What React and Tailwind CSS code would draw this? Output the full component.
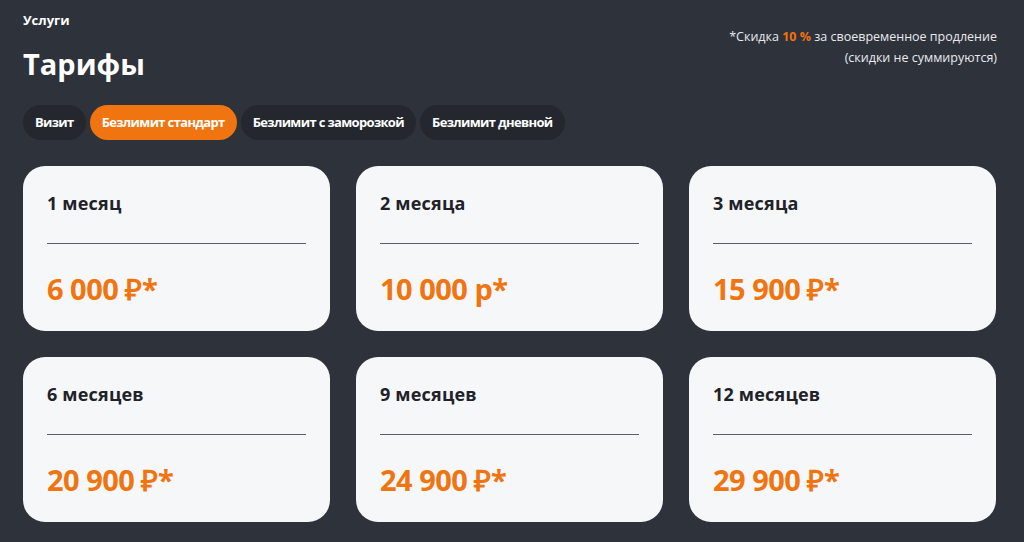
import { useState } from "react";

const TABS = ["Визит", "Безлимит стандарт", "Безлимит с заморозкой", "Безлимит дневной"];

const PLANS = [
  { term: "1 месяц", price: "6 000 ₽*" },
  { term: "2 месяца", price: "10 000 р*" },
  { term: "3 месяца", price: "15 900 ₽*" },
  { term: "6 месяцев", price: "20 900 ₽*" },
  { term: "9 месяцев", price: "24 900 ₽*" },
  { term: "12 месяцев", price: "29 900 ₽*" },
];

function PlanCard({ term, price }) {
  return (
    <div className="h-[165px] rounded-[22px] bg-[#f6f7f9] px-6 pt-[24px]">
      <p className="font-['Open_Sans',sans-serif] text-[18px] font-bold leading-[26px] tracking-[0.2px] text-[#1f2228]">
        {term}
      </p>
      <div className="mt-[27px] h-px bg-[#5b5e63]" />
      <p className="mt-[23px] font-['Open_Sans',sans-serif] text-[29px] font-bold leading-[44px] tracking-[-0.5px] text-[#f07410]">
        {price}
      </p>
    </div>
  );
}

export default function App() {
  const [active, setActive] = useState(1);

  return (
    <div className="min-h-[542px] bg-[#2e323b] px-[23px] pt-[11px] font-['Open_Sans',sans-serif] text-white">
      <div className="flex items-start justify-between">
        <div>
          <p className="text-[13px] font-bold leading-[18px]">Услуги</p>
          <h1 className="mt-[17px] text-[29px] font-bold leading-[36px]">Тарифы</h1>
        </div>
        <p className="mt-[15px] mr-[4px] text-right text-[12.5px] leading-[21px] text-[#e9eaec]">
          *Скидка <span className="font-bold text-[#f07410]">10 %</span> за своевременное продление
          <br />
          (скидки не суммируются)
        </p>
      </div>

      <div className="mt-[23px] flex gap-[4px]">
        {TABS.map((tab, i) => (
          <button
            key={tab}
            onClick={() => setActive(i)}
            className={
              "h-[35px] rounded-full px-[12px] text-[13px] font-bold tracking-[-0.65px] " +
              (i === active ? "bg-[#f07410] text-white" : "bg-[#24272d] text-white")
            }
          >
            {tab}
          </button>
        ))}
      </div>

      <div className="mt-[26px] grid grid-cols-3 gap-x-[26px] gap-y-[26px] pr-[5px]">
        {PLANS.map((p) => (
          <PlanCard key={p.term} {...p} />
        ))}
      </div>
    </div>
  );
}
